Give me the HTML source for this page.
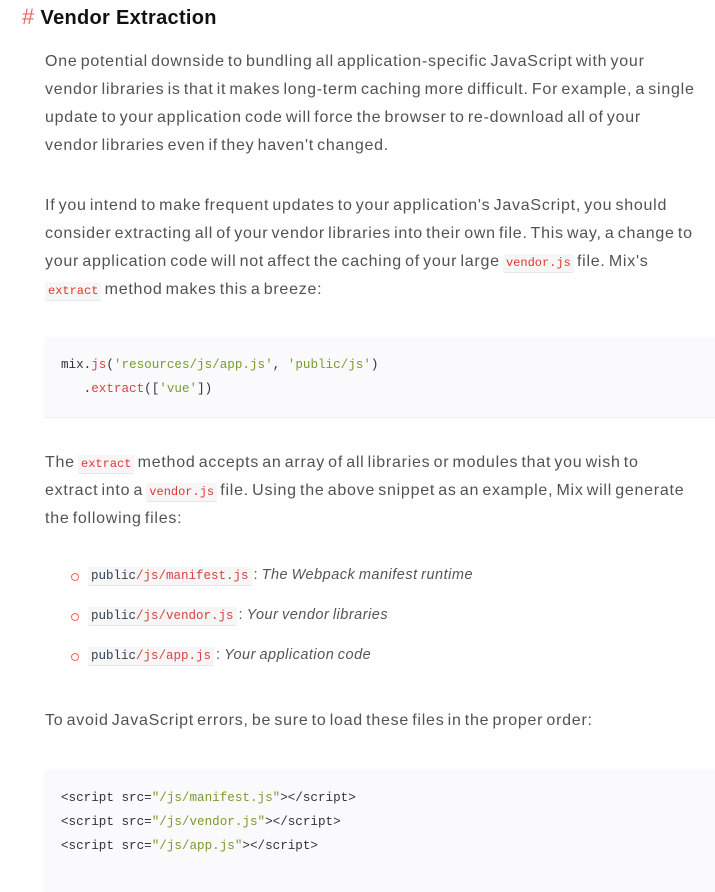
<!DOCTYPE html>
<html><head><meta charset="utf-8"><style>
body{margin:0;background:#fff;width:715px;height:862px;overflow:hidden;position:relative;font-family:"Liberation Sans",sans-serif;color:#525252}
h2{position:absolute;left:22px;top:4px;margin:0;font-size:20px;font-weight:bold;color:#111;white-space:nowrap;letter-spacing:0.3px}
h2 span{color:#f4645f;font-weight:normal;margin-right:6px;font-size:22px}
p{position:absolute;left:45px;margin:0;font-size:16px;line-height:28px;white-space:nowrap;letter-spacing:0.75px;word-spacing:-2px}
code{font-family:"Liberation Mono",monospace;font-size:12px;line-height:14px;letter-spacing:0;word-spacing:0;color:#e3342f;background:#f6f6f6;padding:2px 3px;border-bottom:1px solid #e8e8e8;border-radius:2px}
pre{position:absolute;left:44px;right:0;margin:0;background:#fafafc;border-bottom:1px solid #eceef0;font-family:"Liberation Mono",monospace;font-size:12.6px;line-height:24px;padding:16px 0 16px 17px;color:#333}
.s{color:#7a9a2a}.r{color:#d0453f}.n{color:#2d3e50}
li{position:absolute;left:76px;list-style:none;font-size:14.5px;white-space:nowrap;letter-spacing:0.5px;word-spacing:-1px}
li:before{content:"";position:absolute;left:-5px;top:6px;width:6px;height:6px;border:1.5px solid #f4645f;border-radius:50%}
li code{margin-left:12px;margin-right:2px;color:#d0453f;font-size:12.5px}
li i{color:#555}
</style></head><body>
<h2><span>#</span>Vendor Extraction</h2>
<p style="top:48px">One potential downside to bundling all application-specific JavaScript with your<br>vendor libraries is that it makes long-term caching more difficult. For example, a single<br>update to your application code will force the browser to re-download all of your<br>vendor libraries even if they haven't changed.</p>
<p style="top:192px">If you intend to make frequent updates to your application's JavaScript, you should<br>consider extracting all of your vendor libraries into their own file. This way, a change to<br>your application code will not affect the caching of your large <code>vendor.js</code> file. Mix's<br><code>extract</code> method makes this a breeze:</p>
<pre style="top:337px;height:48px">mix.<span class="r">js</span>(<span class="s">'resources/js/app.js'</span>, <span class="s">'public/js'</span>)
   .<span class="r">extract</span>([<span class="s">'vue'</span>])</pre>
<p style="top:449px">The <code>extract</code> method accepts an array of all libraries or modules that you wish to<br>extract into a <code>vendor.js</code> file. Using the above snippet as an example, Mix will generate<br>the following files:</p>
<li style="top:567px"><code><span class="n">public</span>/js/manifest.js</code>: <i>The Webpack manifest runtime</i></li>
<li style="top:607px"><code><span class="n">public</span>/js/vendor.js</code>: <i>Your vendor libraries</i></li>
<li style="top:647px"><code><span class="n">public</span>/js/app.js</code>: <i>Your application code</i></li>
<p style="top:707px">To avoid JavaScript errors, be sure to load these files in the proper order:</p>
<pre style="top:770px;height:90px;border:none">&lt;script src=<span class="s">"/js/manifest.js"</span>&gt;&lt;/script&gt;
&lt;script src=<span class="s">"/js/vendor.js"</span>&gt;&lt;/script&gt;
&lt;script src=<span class="s">"/js/app.js"</span>&gt;&lt;/script&gt;</pre>
</body></html>
